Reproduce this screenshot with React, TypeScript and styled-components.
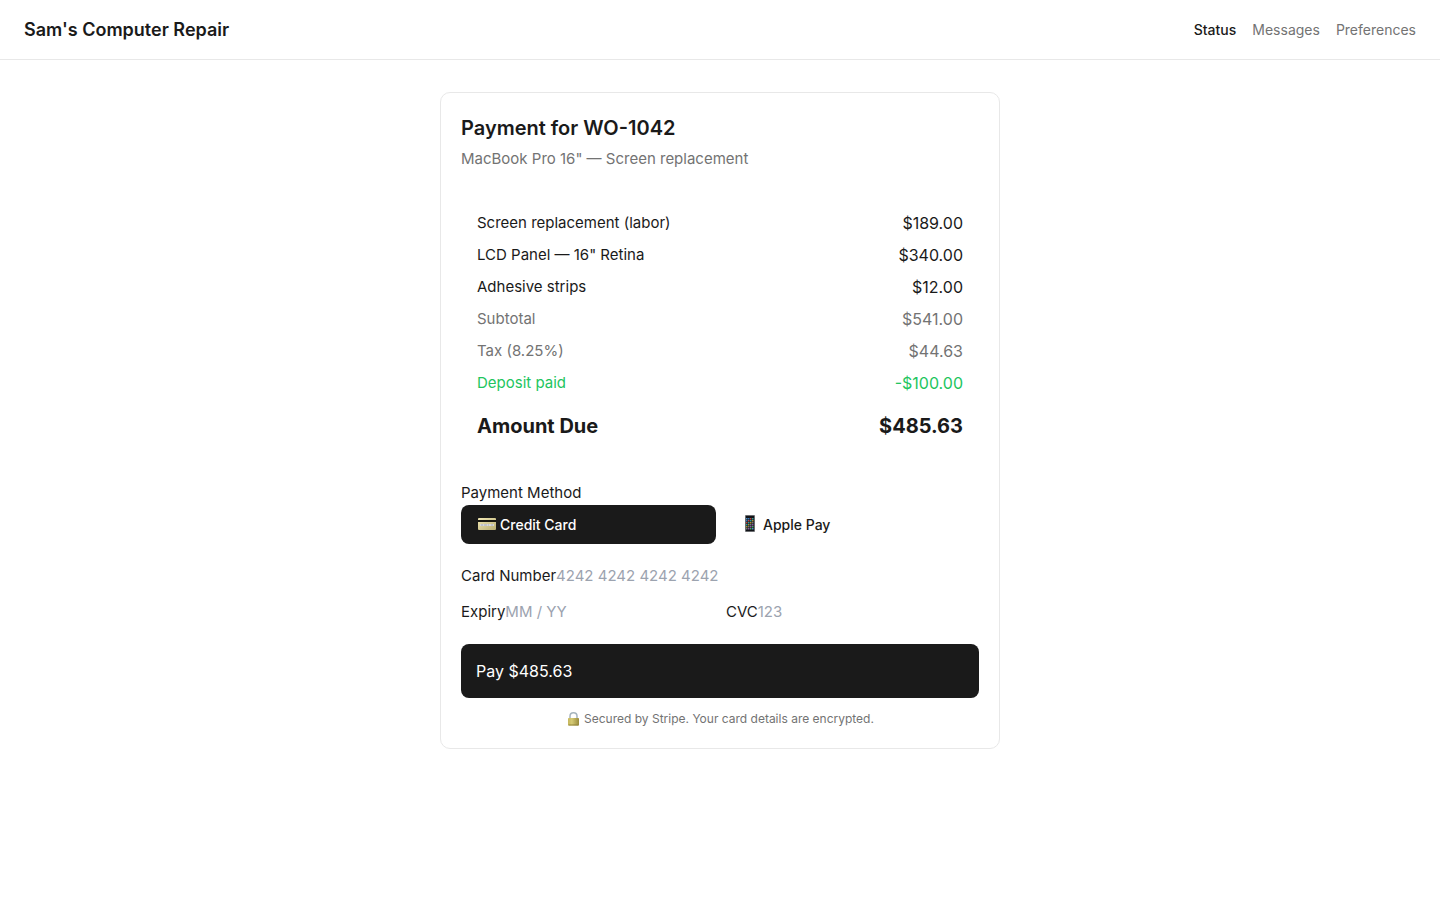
import React from "react";
import styled, { createGlobalStyle } from "styled-components";

const GlobalStyle = createGlobalStyle`
  *, *::before, *::after { box-sizing: border-box; }
  body {
    margin: 0;
    background: #fff;
    color: #1a1a1a;
    font-family: Inter, "Liberation Sans", sans-serif;
    font-size: 15px;
    line-height: 24px;
    -webkit-font-smoothing: antialiased;
  }
  h1, p, dl, dt, dd, fieldset, legend { margin: 0; padding: 0; border: 0; }
  button, input { font: inherit; color: inherit; }
`;

const Header = styled.header`
  display: flex;
  align-items: center;
  justify-content: space-between;
  padding: 16px 24px;
  border-bottom: 1px solid #e8e8e8;
`;

const Brand = styled.div`
  font-size: 18px;
  line-height: 27px;
  font-weight: 600;
`;

const Nav = styled.nav`
  display: flex;
  gap: 16px;
`;

const NavLink = styled.a<{ $active?: boolean }>`
  font-size: 14px;
  line-height: 21px;
  font-weight: ${(p) => (p.$active ? 500 : 400)};
  color: ${(p) => (p.$active ? "#1a1a1a" : "#737373")};
  text-decoration: none;
`;

const Main = styled.main`
  display: flex;
  justify-content: center;
  padding: 32px 16px;
`;

const Card = styled.form`
  width: 100%;
  max-width: 560px;
  padding: 20px;
  border: 1px solid #e8e8e8;
  border-radius: 10px;
`;

const Title = styled.h1`
  font-size: 20px;
  line-height: 30px;
  font-weight: 600;
`;

const Subtitle = styled.p`
  margin-top: 4px;
  color: #737373;
`;

const Summary = styled.dl`
  display: flex;
  flex-direction: column;
  gap: 8px;
  margin: 24px 0;
  padding: 16px;
`;

const tones = { normal: "#1a1a1a", muted: "#737373", credit: "#22c55e" };

const Line = styled.div<{ $tone: keyof typeof tones }>`
  display: flex;
  justify-content: space-between;
  color: ${(p) => tones[p.$tone]};
`;

const Amount = styled.dd`
  font-size: 16px;
`;

const TotalLine = styled(Line)`
  padding-top: 8px;
  font-size: 20px;
  line-height: 30px;
  font-weight: 700;
`;

const Methods = styled.fieldset`
  display: grid;
  grid-template-columns: 1fr 1fr;
  column-gap: 8px;
  margin-bottom: 20px;
`;

const MethodButton = styled.button<{ $selected?: boolean }>`
  display: flex;
  align-items: center;
  gap: 4px;
  padding: 9px 16px;
  border: 0;
  border-radius: 8px;
  background: ${(p) => (p.$selected ? "#1a1a1a" : "transparent")};
  color: ${(p) => (p.$selected ? "#fff" : "#1a1a1a")};
  font-size: 14px;
  line-height: 21px;
  font-weight: 500;
`;

const FieldRow = styled.div`
  display: grid;
  grid-template-columns: repeat(2, minmax(0, 1fr));
  gap: 12px;
  margin: 12px 0 20px;
`;

const Field = styled.div`
  display: flex;
  min-width: 0;
`;

const Input = styled.input`
  flex: 1;
  min-width: 0;
  height: 24px;
  padding: 0;
  border: 0;
  outline: 0;
  background: transparent;
  &::placeholder { color: #9ca3af; opacity: 1; }
`;

const PayButton = styled.button`
  display: block;
  width: 100%;
  padding: 15px;
  border: 0;
  border-radius: 8px;
  background: #1a1a1a;
  color: #fff;
  font-size: 16px;
  font-weight: 400;
  text-align: left;
`;

const Note = styled.p`
  display: flex;
  align-items: center;
  justify-content: center;
  gap: 4px;
  margin-top: 12px;
  font-size: 12px;
  line-height: 18px;
  color: #737373;
`;

const CardIcon = () => (
  <svg width="19" height="15" viewBox="0 0 19 15" aria-hidden="true">
    <defs>
      <linearGradient id="cardGold" x1="0" y1="0" x2="1" y2="1">
        <stop offset="0" stopColor="#f1e8b4" />
        <stop offset="1" stopColor="#b9ae73" />
      </linearGradient>
    </defs>
    <rect x="1" y="1" width="18" height="12" rx="1" fill="url(#cardGold)" />
    <rect x="1" y="3" width="18" height="2" fill="#171710" />
    <rect x="3" y="7" width="14" height="2" fill="#d9d8d4" />
    <path d="M4 8h2m1 0h3m1 0h1m2 0h2" stroke="#a9b0c4" />
  </svg>
);

const appColors = ["#4b8fc5", "#75787c", "#ba4b45", "#4ba868", "#b0903b", "#3d78bf", "#8b5aa3", "#32a09b"];

const PhoneIcon = () => (
  <svg width="19" height="19" viewBox="0 0 19 19" aria-hidden="true">
    <rect x="5" y="0" width="10" height="17" rx="1" fill="#6b6d70" />
    <rect x="6" y="1" width="8" height="15" fill="#111317" />
    {Array.from({ length: 24 }, (_, i) => (
      <rect
        key={i}
        x={6 + (i % 4) * 2}
        y={3 + Math.floor(i / 4) * 2}
        width="1.5"
        height="1.5"
        fill={appColors[(i * 5 + Math.floor(i / 4)) % 8]}
      />
    ))}
  </svg>
);

const LockIcon = () => (
  <svg width="14" height="16" viewBox="0 0 14 16" aria-hidden="true">
    <defs>
      <linearGradient id="lockGold" x1="0" y1="0" x2="1" y2="0">
        <stop offset="0" stopColor="#c6b75c" />
        <stop offset=".35" stopColor="#d5ca75" />
        <stop offset="1" stopColor="#998b3c" />
      </linearGradient>
    </defs>
    <path d="M4 8V5.2C4 .6 11 .6 11 5.2V8" fill="none" stroke="#a6b4be" strokeWidth="1.5" />
    <rect x="2" y="7" width="11" height="7.5" rx=".8" fill="url(#lockGold)" />
    <path d="M2.5 14h10" stroke="#91833b" />
  </svg>
);

const items: { label: string; amount: string; tone: keyof typeof tones }[] = [
  { label: "Screen replacement (labor)", amount: "$189.00", tone: "normal" },
  { label: 'LCD Panel — 16" Retina', amount: "$340.00", tone: "normal" },
  { label: "Adhesive strips", amount: "$12.00", tone: "normal" },
  { label: "Subtotal", amount: "$541.00", tone: "muted" },
  { label: "Tax (8.25%)", amount: "$44.63", tone: "muted" },
  { label: "Deposit paid", amount: "-$100.00", tone: "credit" },
];

export default function App() {
  return (
    <>
      <GlobalStyle />
      <Header>
        <Brand>Sam's Computer Repair</Brand>
        <Nav>
          <NavLink href="#status" $active aria-current="page">Status</NavLink>
          <NavLink href="#messages">Messages</NavLink>
          <NavLink href="#preferences">Preferences</NavLink>
        </Nav>
      </Header>
      <Main>
        <Card onSubmit={(e) => e.preventDefault()}>
          <Title>Payment for WO-1042</Title>
          <Subtitle>MacBook Pro 16" — Screen replacement</Subtitle>
          <Summary>
            {items.map((item) => (
              <Line key={item.label} $tone={item.tone}>
                <dt>{item.label}</dt>
                <Amount>{item.amount}</Amount>
              </Line>
            ))}
            <TotalLine $tone="normal">
              <dt>Amount Due</dt>
              <dd>$485.63</dd>
            </TotalLine>
          </Summary>
          <Methods>
            <legend>Payment Method</legend>
            <MethodButton type="button" $selected aria-pressed="true">
              <CardIcon />
              Credit Card
            </MethodButton>
            <MethodButton type="button" aria-pressed="false">
              <PhoneIcon />
              Apple Pay
            </MethodButton>
          </Methods>
          <Field>
            <label htmlFor="card">Card Number</label>
            <Input id="card" placeholder="4242 4242 4242 4242" />
          </Field>
          <FieldRow>
            <Field>
              <label htmlFor="expiry">Expiry</label>
              <Input id="expiry" placeholder="MM / YY" />
            </Field>
            <Field>
              <label htmlFor="cvc">CVC</label>
              <Input id="cvc" placeholder="123" />
            </Field>
          </FieldRow>
          <PayButton type="submit">Pay $485.63</PayButton>
          <Note>
            <LockIcon />
            Secured by Stripe. Your card details are encrypted.
          </Note>
        </Card>
      </Main>
    </>
  );
}
